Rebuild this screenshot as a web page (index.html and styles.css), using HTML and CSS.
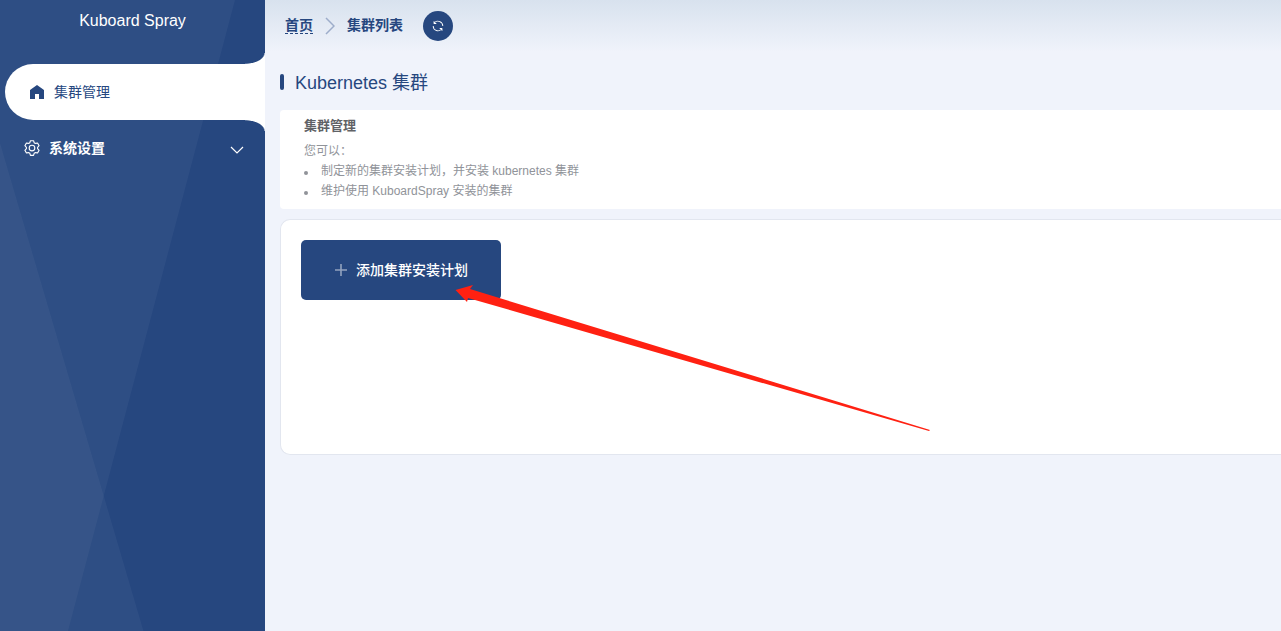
FILE: index.html
```html
<!DOCTYPE html>
<html lang="zh-CN">
<head>
<meta charset="utf-8">
<title>Kuboard Spray</title>
<link rel="stylesheet" href="styles.css">
</head>
<body>
<div class="app">
  <aside class="sidebar">
    <svg class="sidebar-bg" viewBox="0 0 265 631"><path d="M0 0H235L68 631H0Z"/><path d="M0 143L143.500 631H0Z"/></svg>
    <div class="brand">Kuboard Spray</div>
    <nav class="menu">
      <a class="item active">
        <svg class="home" viewBox="0 0 14 14"><path d="M7 0L14 5V14H9V9H5V14H0V5Z"/></svg>
        <span>集群管理</span>
      </a>
      <a class="item group">
        <svg class="gear" viewBox="0 0 1024 1024"><path d="M600.704 64a32 32 0 0 1 30.464 22.208l35.2 109.376c14.784 7.232 28.928 15.36 42.432 24.512l112.384-24.192a32 32 0 0 1 34.432 15.36L944.32 364.8a32 32 0 0 1-4.032 37.504l-77.12 85.12a357.12 357.12 0 0 1 0 49.024l77.12 85.248a32 32 0 0 1 4.032 37.504l-88.704 153.6a32 32 0 0 1-34.432 15.296L708.8 803.904c-13.44 9.088-27.648 17.28-42.368 24.512l-35.264 109.376A32 32 0 0 1 600.704 960H423.296a32 32 0 0 1-30.464-22.208L357.696 828.48a351.616 351.616 0 0 1-42.56-24.64l-112.32 24.256a32 32 0 0 1-34.432-15.36L79.68 659.2a32 32 0 0 1 4.032-37.504l77.12-85.248a357.12 357.12 0 0 1 0-48.896l-77.12-85.248A32 32 0 0 1 79.68 364.8l88.704-153.6a32 32 0 0 1 34.432-15.296l112.32 24.256c13.568-9.152 27.776-17.408 42.56-24.64l35.2-109.312A32 32 0 0 1 423.232 64H600.64zm-23.424 64H446.72l-36.352 113.088-24.512 11.968a294.113 294.113 0 0 0-34.816 20.096l-22.656 15.36-116.224-25.088-65.28 113.152 79.68 88.192-1.92 27.136a293.12 293.12 0 0 0 0 40.192l1.92 27.136-79.808 88.192 65.344 113.152 116.224-25.024 22.656 15.296a294.113 294.113 0 0 0 34.816 20.096l24.512 11.968L446.72 896h130.688l36.48-113.152 24.448-11.904a288.282 288.282 0 0 0 34.752-20.096l22.592-15.296 116.288 25.024 65.28-113.152-79.744-88.192 1.92-27.136a293.12 293.12 0 0 0 0-40.256l-1.92-27.136 79.808-88.128-65.344-113.152-116.288 24.96-22.592-15.232a287.616 287.616 0 0 0-34.752-20.096l-24.448-11.904L577.344 128zM512 320a192 192 0 1 1 0 384 192 192 0 0 1 0-384zm0 64a128 128 0 1 0 0 256 128 128 0 0 0 0-256z"/></svg>
        <span>系统设置</span>
        <svg class="chevron" viewBox="0 0 14 8"><path d="M1 1L7 7L13 1"/></svg>
      </a>
    </nav>
  </aside>
  <main class="main">
    <header class="topbar">
      <a class="crumb link">首页</a>
      <svg class="separator" viewBox="0 0 10 18"><path d="M1 1L9 9L1 17"/></svg>
      <span class="crumb">集群列表</span>
      <button class="refresh"><svg viewBox="0 0 1024 1024"><path d="M771.776 794.88A384 384 0 0 1 128 512h64a320 320 0 0 0 555.712 216.448H654.72a32 32 0 1 1 0-64h149.056a32 32 0 0 1 32 32v148.928a32 32 0 1 1-64 0v-50.56zM276.288 295.616h92.992a32 32 0 0 1 0 64H220.16a32 32 0 0 1-32-32V178.56a32 32 0 0 1 64 0v50.56A384 384 0 0 1 896.128 512h-64a320 320 0 0 0-555.776-216.384z"/></svg></button>
    </header>
    <section class="content">
      <h1 class="title"><span>Kubernetes 集群</span></h1>
      <div class="notice">
        <h2>集群管理</h2>
        <p>您可以：</p>
        <ul>
          <li>制定新的集群安装计划，并安装 kubernetes 集群</li>
          <li>维护使用 KuboardSpray 安装的集群</li>
        </ul>
      </div>
      <div class="card">
        <button class="add">
          <svg viewBox="0 0 12 12"><path d="M6 0V12M0 6H12"/></svg>
          <span>添加集群安装计划</span>
        </button>
      </div>
    </section>
  </main>
  <svg class="arrow" viewBox="0 0 1281 631"><path d="M455.500 290L473 285L470 289L930 430L929 431L468 298L467 302Z"/></svg>
</div>
</body>
</html>
```

FILE: styles.css
```css
* { box-sizing: border-box; }
body {
  margin: 0;
  overflow: hidden;
  background: #f0f3fb;
  font-family: "Liberation Sans", "Noto Sans CJK SC", sans-serif;
  font-size: 14px;
  color: #26477f;
}
h1, h2, p, ul { margin: 0; padding: 0; }
svg { display: block; fill: currentColor; }
.app { position: relative; display: flex; height: 631px; }
.sidebar { position: relative; width: 265px; flex: none; background: #26477f; color: #fff; }
.sidebar-bg { position: absolute; inset: 0; width: 265px; height: 631px; }
.sidebar-bg path { fill: #fff; fill-opacity: .04; }
.brand { position: relative; height: 64px; line-height: 42px; font-size: 16px; text-align: center; }
.menu { position: relative; }
.item { display: flex; align-items: center; height: 56px; }
.item span { padding-bottom: 2px; }
.active {
  position: relative;
  margin-left: 5px;
  padding-left: 25px;
  gap: 10px;
  border-radius: 28px 0 0 28px;
  background: #fff;
  color: #26477f;
}
.active::before, .active::after { content: ""; position: absolute; right: 0; width: 20px; height: 11px; }
.active::before { top: -11px; background: radial-gradient(ellipse 20px 11px at 0 0, transparent 94%, #fff 101%); }
.active::after { bottom: -11px; background: radial-gradient(ellipse 20px 11px at 0 100%, transparent 94%, #fff 101%); }
.home { width: 14px; height: 14px; }
.group { padding: 0 21px 0 23px; gap: 8px; font-weight: 700; }
.gear { width: 18px; height: 18px; }
.chevron { width: 14px; height: 8px; margin: 4px 0 0 auto; fill: none; stroke: currentColor; stroke-width: 1.2; }
.main { flex: 1; min-width: 0; }
.topbar {
  display: flex;
  align-items: center;
  height: 52px;
  padding-left: 20px;
  background: linear-gradient(#d8e2ee, #f0f3fb);
}
.crumb { margin-bottom: 2px; font-weight: 700; line-height: 16px; }
.link { margin-bottom: 1px; border-bottom: 1px dashed #26477f; }
.separator { width: 10px; height: 18px; margin: 0 12px; fill: none; stroke: #9dadca; stroke-width: 1.5; }
.refresh {
  display: grid;
  place-items: center;
  width: 30px;
  height: 30px;
  margin-left: 20px;
  padding: 0;
  border: 0;
  border-radius: 50%;
  background: #26477f;
  color: #fff;
}
.refresh svg { width: 14px; height: 14px; }
.content { padding: 22px 0 0 15px; }
.title {
  display: flex;
  align-items: center;
  gap: 11px;
  height: 16px;
  margin-bottom: 20px;
  font-size: 18px;
  font-weight: 400;
}
.title span { padding-bottom: 2px; }
.title::before { content: ""; width: 4px; height: 16px; border-radius: 2px; background: #26477f; }
.notice {
  height: 99px;
  padding: 8px 24px;
  border-radius: 4px 0 0 4px;
  background: #fff;
  color: #909399;
  font-size: 12px;
  line-height: 20px;
}
.notice h2 { height: 23px; line-height: 15px; color: #606266; font-size: 13px; }
.notice ul { list-style: none; }
.notice li { display: flex; align-items: center; gap: 13px; }
.notice li::before { content: ""; width: 4px; height: 4px; margin-top: 3px; border-radius: 50%; background: #909399; }
.card {
  height: 236px;
  margin-top: 10px;
  padding: 20px;
  border: 1px solid #e2e6ef;
  border-right: 0;
  border-radius: 10px 0 0 10px;
  background: #fff;
}
.add {
  display: flex;
  align-items: center;
  justify-content: center;
  gap: 9px;
  width: 200px;
  height: 60px;
  padding: 0 0 0 1px;
  border: 0;
  border-radius: 5px;
  background: #26477f;
  color: #fff;
  font: inherit;
  font-weight: 500;
}
.add span { padding-bottom: 2px; }
.add svg { width: 12px; height: 12px; stroke: #93a3bf; stroke-width: 1.6; }
.arrow { position: absolute; inset: 0; width: 1281px; height: 631px; fill: #ff2112; pointer-events: none; }
```
